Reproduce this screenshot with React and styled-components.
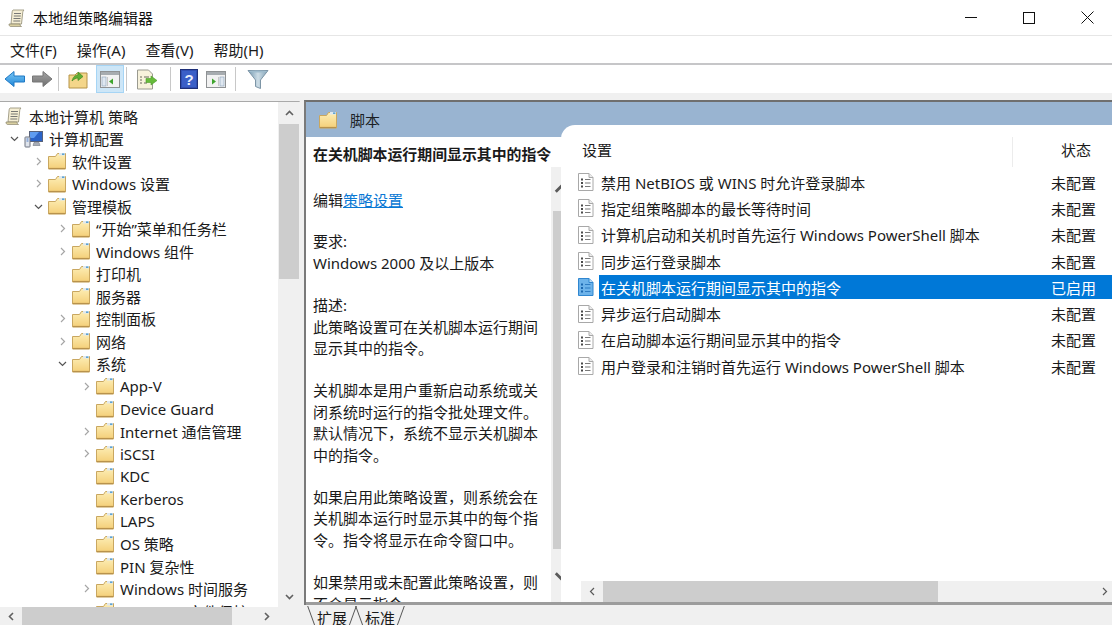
import React from "react";
import styled, { createGlobalStyle } from "styled-components";

const Global = createGlobalStyle`
  html, body { margin: 0; padding: 0; background: #fff; }
  body { font-family: "Noto Sans", "Noto Sans CJK SC", sans-serif; }
`;

const FONT = `"Noto Sans", "Noto Sans CJK SC", sans-serif`;

const Window = styled.div`
  width: 1112px; height: 625px; overflow: hidden; display: flex; flex-direction: column;
  font-family: ${FONT}; font-size: 15px; color: #1a1a1a; background: #fff;
`;
const TitleBar = styled.div`
  height: 36px; flex: none; display: flex; align-items: center; padding: 0 18px 0 8px;
  border-bottom: 1px solid #e6e6e6; box-sizing: border-box;
`;
const TitleText = styled.span`margin-left: 7px; flex: 1; color: #111;`;
const Controls = styled.div`display: flex; gap: 46px; align-items: center;`;
const MenuBar = styled.div`
  height: 29px; flex: none; box-sizing: border-box; display: flex; gap: 20px; align-items: center; padding: 0 0 0 10px;
  border-bottom: 2px solid #c6c6c8;
`;
const Toolbar = styled.div`
  height: 28px; flex: none; display: flex; align-items: center; padding-left: 3px;
`;
const ToolBtn = styled.div`
  width: ${p => p.$w || 28}px; height: 28px; flex: none; display: flex; align-items: center; justify-content: center;
  box-sizing: border-box;
  ${p => p.$active && `background: #cde6f7; border: 1px solid #a6d5f5;`}
`;
const ToolSep = styled.div`width: 1px; height: 24px; background: #c8c8c8; flex: none; margin: 0 ${p => p.$m || 5}px;`;
const Body = styled.div`
  flex: 1; min-height: 0; display: flex; background: #f0f0f0; padding-top: 8px; align-items: stretch;
`;
const TreePane = styled.div`
  width: 300px; flex: none; display: grid; grid-template-columns: 278px 22px; grid-template-rows: 1fr 18px;
  border-top: 1px solid #a9a9a9; border-right: 1px solid #d8d8d8; box-sizing: border-box;
`;
const TreeList = styled.div`overflow: hidden; background: #fff; padding-top: 3px;`;
const TreeRow = styled.div`
  height: 22.5px; display: flex; align-items: center; padding-left: ${p => 4 + 24 * Math.max(p.$depth - 1, 0)}px;
  white-space: nowrap;
`;
const Chevron = styled.div`width: 20px; flex: none; display: flex; justify-content: center; align-items: center;`;
const TreeLabel = styled.span`margin-left: 6px;`;
const RootRow = styled(TreeRow)`padding-left: 5px;`;
const VTrack = styled.div`
  background: #f0f0f0; display: flex; flex-direction: column; align-items: center; min-height: 0;
`;
const ArrowBox = styled.div`
  flex: none; height: ${p => p.$h}px; display: flex; align-items: center; justify-content: center; width: 100%;
`;
const VThumb = styled.div`
  flex: none; width: ${p => p.$w}px; height: ${p => p.$h}px; background: #cdcdcd;
`;
const Spacer = styled.div`flex: 1; min-height: 0; min-width: 0;`;
const HTrack = styled.div`
  grid-column: 1 / span 2; background: #f0f0f0; display: flex; align-items: center;
`;
const HArrowBox = styled.div`
  flex: none; width: ${p => p.$w}px; height: 100%; display: flex; align-items: center; justify-content: center;
`;
const HThumb = styled.div`flex: none; width: ${p => p.$w}px; height: 100%; background: #cdcdcd;`;

const RightPane = styled.div`
  flex: 1; min-width: 0; margin-left: 4px; display: flex; flex-direction: column;
  border-top: 2px solid #6f6f6f; border-left: 2px solid #7a7a7a; background: #fff; margin-top: -1px; margin-bottom: 20px;
  position: relative;
`;
const Band = styled.div`
  height: 35px; flex: none; background: #99b4d1; display: flex; align-items: center; padding-left: 13px; gap: 13px; color: #1b1f25;
`;
const Panes = styled.div`
  flex: 1; min-height: 0; display: flex; border-bottom: 3px solid #9c9c9c;
`;
const DescCol = styled.div`
  width: 245px; flex: none; padding: 7px 0 0 7px; box-sizing: border-box; overflow: hidden; line-height: 21.7px; color: #1a1a1a;
`;
const DescTitle = styled.div`font-weight: 700; white-space: nowrap; margin-bottom: 24px; font-size: 14.9px;`;
const Para = styled.div`margin-bottom: 20px; white-space: nowrap;`;
const PolicyLink = styled.span`color: #0a78d4; text-decoration: underline;`;
const DescScroll = styled.div`
  width: 21px; flex: none; display: flex; flex-direction: column; margin-top: 30px; background: #f0f0f0; align-items: center;
`;
const ListCol = styled.div`
  flex: 1; min-width: 0; display: flex; flex-direction: column; background: #fff; margin-top: -12px; border-top-left-radius: 14px; position: relative;
  margin-left: -11px; overflow: hidden;
`;
const ListInner = styled.div`flex: 1; min-height: 0; padding-left: 20px; display: flex; flex-direction: column;`;
const ListHead = styled.div`
  height: 42px; flex: none; display: flex; align-items: flex-end; padding: 0 0 6px 0; box-sizing: border-box; position: relative;
`;
const HeadSetting = styled.div`width: 430px; padding-left: 2px; flex: none; line-height: 22px; margin-left: -1px;`;
const HeadDivider = styled.div`width: 1px; height: 30px; background: #ececec; margin-bottom: -6px; flex: none;`;
const HeadState = styled.div`padding-left: 48px; line-height: 22px;`;
const Rows = styled.div`padding-top: 2px;`;
const Row = styled.div`
  height: 26.3px; display: flex; align-items: center; white-space: nowrap; margin-left: -3px;
`;
const RowIcon = styled.div`width: 21px; flex: none; display: flex; align-items: center; justify-content: flex-start;`;
const RowMain = styled.div`
  flex: 1; height: 24px; display: flex; align-items: center; padding-left: 2px; min-width: 0;
  ${p => p.$sel && `background: #0078d7; color: #fff;`}
`;
const RowName = styled.div`width: 450px; flex: none; color: inherit;`;
const RowState = styled.div`color: inherit;`;
const HBar = styled.div`height: 21px; flex: none; display: flex; background: #f0f0f0; margin-left: 20px;`;
const TabsBar = styled.div`
  position: absolute; left: -2px; right: 0; top: 100%; height: 22px; background: #f0f0f0; display: flex; align-items: flex-end; padding-left: 12px; gap: 16px;
  margin-top: 0;
  color: #1a1a1a;
`;
const Tab = styled.div`
  position: relative; height: 21px; line-height: 24px; padding: 0 1px;
  &::before, &::after {
    content: ""; position: absolute; top: 0; bottom: 0; width: 1px; background: #555;
  }
  &::before { left: -5px; transform: skewX(20deg); }
  &::after { right: -5px; transform: skewX(-20deg); }
`;

const Folder = ({ size = 18 }) => (
  <svg width={size} height={size} viewBox="0 0 18 18">
    <defs>
      <linearGradient id="fg" x1="0" y1="0" x2="0" y2="1">
        <stop offset="0" stopColor="#fdeeb6" />
        <stop offset="1" stopColor="#f4cf78" />
      </linearGradient>
    </defs>
    <path d="M.5 4.5V17h17V1.5h-8l-2 3z" fill="url(#fg)" stroke="#c9a760" strokeWidth="1" />
    <rect x="11" y="1" width="6" height="2.5" fill="#dfe8ee" />
    <rect x="14" y="1.4" width="2.4" height="1.6" fill="#5ea3d4" />
    <path d="M1 16.5h16" stroke="#b8924c" strokeWidth="1.2" />
  </svg>
);
const Scroll = ({ size = 18 }) => (
  <svg width={size} height={size} viewBox="0 0 18 18">
    <path d="M5 1h11c-1 1-1.3 2-1.3 3l-1.2 11H3L4 4c.1-1.4.3-2.5 1-3z" fill="#f5eed4" stroke="#8f8a72" strokeWidth=".8" />
    <path d="M1 15h11c0 1.2.5 2 1.5 2.6H2.5C1.5 17.300 1 16.200 1 15z" fill="#d9cfa0" stroke="#8f8a72" strokeWidth=".8" />
    <path d="M6 4.500h7M5.800 7h7M5.500 9.500h7M5.300 12h7" stroke="#6a6a6a" strokeWidth=".9" />
  </svg>
);
const Computer = () => (
  <svg width="19" height="18" viewBox="0 0 19 18">
    <rect x="5.500" y="1.500" width="13" height="10" fill="#2b63c7" stroke="#58627a" />
    <path d="M6 2h9l-5 6H6z" fill="#5f9cf0" />
    <path d="M10 12.500h5l1 3H9z" fill="#a8adb7" stroke="#747a85" strokeWidth=".6" />
    <rect x="1" y="7" width="5" height="10" rx=".6" fill="#dfe4ec" stroke="#6c7380" />
    <path d="M2.500 9h2M2.500 11h2" stroke="#4c7dc7" strokeWidth="1" />
  </svg>
);
const DocIcon = ({ sel }) => {
  const c = sel ? "#1c68b0" : "#4a4a4a";
  return (
    <svg width="16" height="20" viewBox="0 0 16 20">
      <path d="M.5 1.500h10.500l4 4v13H.5z" fill={sel ? "#6db3ea" : "#fff"} stroke={sel ? "#2f86d0" : "#a8a8a8"} />
      <path d="M11 1.500v4h4" fill={sel ? "#bcdcf5" : "#ececec"} stroke={sel ? "#2f86d0" : "#a8a8a8"} />
      {[7.5, 11, 14.500].map(y => (
        <g key={y}>
          <rect x="3" y={y - 1} width="2" height="2" fill={c} />
          <path d={`M7 ${y}h5.500`} stroke={sel ? "#2f7cc2" : "#7a7a7a"} strokeWidth="1" />
        </g>
      ))}
    </svg>
  );
};
const Chev = ({ dir, color = "#a6a6a6", size = 9, sw = 1.2 }) => {
  const d = { r: "M3 1l3.500 3.500L3 8", d: "M1 3l3.500 3.500L8 3", u: "M1 6l3.500-3.500L8 6", l: "M6 1L2.500 4.500 6 8" }[dir];
  return <svg width={size} height={size} viewBox="0 0 9 9"><path d={d} fill="none" stroke={color} strokeWidth={sw} /></svg>;
};
const ArrowIcon = ({ left, color1, color2, stroke }) => (
  <svg width="22" height="18" viewBox="0 0 22 18" style={{ transform: left ? "none" : "scaleX(-1)" }}>
    <defs>
      <linearGradient id={color1.slice(1)} x1="0" y1="0" x2="0" y2="1">
        <stop offset="0" stopColor={color1} />
        <stop offset="1" stopColor={color2} />
      </linearGradient>
    </defs>
    <path d="M1 9l9-7.500V6h10.500v6H10v4.500z" fill={`url(#${color1.slice(1)})`} stroke={stroke} strokeWidth="1" />
  </svg>
);
const UpFolder = () => (
  <svg width="20" height="20" viewBox="0 0 20 20">
    <path d="M1 6v13h18V4H9L7 6z" fill="#f4d68a" stroke="#b69448" />
    <path d="M4 12c1-4 3-6 6-6V3l5 4.500-5 4V9c-2 0-4 1-6 3z" fill="#5fae34" stroke="#3f8a22" strokeWidth=".7" />
  </svg>
);
const PanelIcon = ({ flip }) => (
  <svg width="20" height="17" viewBox="0 0 20 17">
    <rect x=".5" y=".5" width="19" height="16" fill="#f2f2f2" stroke="#8f9294" />
    <rect x="1" y="1" width="18" height="3" fill="#a7acb0" />
    <rect x={flip ? 14 : 2} y="6" width="4" height="9" fill="#dfe7f0" stroke="#8aa0b8" strokeWidth=".6" />
    <path d={flip ? "M6 7.500l4 3-4 3z" : "M13 7.500l-4 3 4 3z"} fill="#3fa52e" />
    <path d={flip ? "M12.500 6v9" : "M7.500 6v9"} stroke="#c8c8c8" />
  </svg>
);
const ExportIcon = () => (
  <svg width="22" height="21" viewBox="0 0 22 21">
    <path d="M1.500 1h11l4 4v15h-15z" fill="#f7f2dc" stroke="#9a9a90" />
    <path d="M4 8h2M8 8h5M4 11h2M4 14h2M8 14h3" stroke="#6a6a5e" />
    <path d="M10 9.500h5V7l6 4.500-6 4.500v-2.500h-5z" fill="#67bb3b" stroke="#4a9a28" strokeWidth=".6" />
  </svg>
);
const HelpIcon = () => (
  <svg width="18" height="20" viewBox="0 0 18 20">
    <rect x=".5" y=".5" width="17" height="19" fill="#2f4eb2" stroke="#1d2f78" />
    <rect x="2" y="2" width="14" height="16" fill="#3a5fc8" />
    <text x="9" y="15.500" textAnchor="middle" fontSize="15" fontWeight="700" fill="#e8eefc" fontFamily="Liberation Sans, sans-serif">?</text>
  </svg>
);
const FilterIcon = () => (
  <svg width="22" height="21" viewBox="0 0 22 21">
    <defs>
      <linearGradient id="flt" x1="0" y1="0" x2="1" y2="0">
        <stop offset="0" stopColor="#6f95ad" />
        <stop offset=".5" stopColor="#cddde6" />
        <stop offset="1" stopColor="#7e9fb4" />
      </linearGradient>
    </defs>
    <path d="M1 1.500h20L13.500 11v8.500l-5-2V11z" fill="url(#flt)" stroke="#7d95a6" />
    <ellipse cx="11" cy="2.500" rx="9" ry="1" fill="#9fbccd" />
  </svg>
);

const tree = [
  { d: 1, t: "计算机配置", c: "d", computer: true },
  { d: 2, t: "软件设置", c: "r" },
  { d: 2, t: "Windows 设置", c: "r" },
  { d: 2, t: "管理模板", c: "d" },
  { d: 3, t: "“开始”菜单和任务栏", c: "r" },
  { d: 3, t: "Windows 组件", c: "r" },
  { d: 3, t: "打印机" },
  { d: 3, t: "服务器" },
  { d: 3, t: "控制面板", c: "r" },
  { d: 3, t: "网络", c: "r" },
  { d: 3, t: "系统", c: "d" },
  { d: 4, t: "App-V", c: "r" },
  { d: 4, t: "Device Guard" },
  { d: 4, t: "Internet 通信管理", c: "r" },
  { d: 4, t: "iSCSI", c: "r" },
  { d: 4, t: "KDC" },
  { d: 4, t: "Kerberos" },
  { d: 4, t: "LAPS" },
  { d: 4, t: "OS 策略" },
  { d: 4, t: "PIN 复杂性" },
  { d: 4, t: "Windows 时间服务", c: "r" },
  { d: 4, t: "Windows 文件保护", c: "r" },
];

const rows = [
  ["禁用 NetBIOS 或 WINS 时允许登录脚本", "未配置"],
  ["指定组策略脚本的最长等待时间", "未配置"],
  ["计算机启动和关机时首先运行 Windows PowerShell 脚本", "未配置"],
  ["同步运行登录脚本", "未配置"],
  ["在关机脚本运行期间显示其中的指令", "已启用", true],
  ["异步运行启动脚本", "未配置"],
  ["在启动脚本运行期间显示其中的指令", "未配置"],
  ["用户登录和注销时首先运行 Windows PowerShell 脚本", "未配置"],
];

const paras = [
  ["要求:", "Windows 2000 及以上版本"],
  ["描述:", "此策略设置可在关机脚本运行期间", "显示其中的指令。"],
  ["关机脚本是用户重新启动系统或关", "闭系统时运行的指令批处理文件。", "默认情况下，系统不显示关机脚本", "中的指令。"],
  ["如果启用此策略设置，则系统会在", "关机脚本运行时显示其中的每个指", "令。指令将显示在命令窗口中。"],
  ["如果禁用或未配置此策略设置，则", "不会显示指令。"],
];

export default function App() {
  return (
    <Window>
      <Global />
      <TitleBar>
        <Scroll />
        <TitleText>本地组策略编辑器</TitleText>
        <Controls>
          <svg width="12" height="12" viewBox="0 0 12 12"><path d="M0 5.500h12" stroke="#111" /></svg>
          <svg width="12" height="12" viewBox="0 0 12 12"><rect x=".5" y=".5" width="11" height="11" fill="none" stroke="#111" /></svg>
          <svg width="13" height="13" viewBox="0 0 13 13"><path d="M.5.500l12 12M12.500.500l-12 12" stroke="#111" /></svg>
        </Controls>
      </TitleBar>
      <MenuBar>
        <span>文件(F)</span><span>操作(A)</span><span>查看(V)</span><span>帮助(H)</span>
      </MenuBar>
      <Toolbar>
        <ToolBtn $w={24}><ArrowIcon left color1="#7cc8f5" color2="#1f86d8" stroke="#1f78c4" /></ToolBtn>
        <ToolBtn $w={30}><ArrowIcon color1="#a6a6a6" color2="#6f6f6f" stroke="#777" /></ToolBtn>
        <ToolSep $m={1} />
        <ToolBtn $w={36}><UpFolder /></ToolBtn>
        <ToolBtn $w={28} $active><PanelIcon /></ToolBtn>
        <ToolSep $m={2} />
        <ToolBtn $w={36}><ExportIcon /></ToolBtn>
        <ToolSep $m={0} />
        <ToolBtn $w={26}><HelpIcon /></ToolBtn>
        <ToolBtn $w={28}><PanelIcon flip /></ToolBtn>
        <ToolSep $m={0} />
        <ToolBtn $w={34}><FilterIcon /></ToolBtn>
      </Toolbar>
      <Body>
        <TreePane>
          <TreeList>
            <RootRow $depth={0}><Scroll /><TreeLabel>本地计算机 策略</TreeLabel></RootRow>
            {tree.map(n => (
              <TreeRow key={n.t} $depth={n.d}>
                <Chevron>{n.c && <Chev dir={n.c} color={n.c === "d" ? "#555" : "#a6a6a6"} />}</Chevron>
                {n.computer ? <Computer /> : <Folder />}
                <TreeLabel>{n.t}</TreeLabel>
              </TreeRow>
            ))}
          </TreeList>
          <VTrack>
            <ArrowBox $h={22}><Chev dir="u" color="#606060" sw={1.6} /></ArrowBox>
            <VThumb $w={20} $h={155} />
            <Spacer />
            <ArrowBox $h={22}><Chev dir="d" color="#606060" sw={1.6} /></ArrowBox>
          </VTrack>
          <HTrack>
            <HArrowBox $w={22}><Chev dir="l" color="#606060" sw={1.6} /></HArrowBox>
            <HThumb $w={210} />
            <Spacer />
            <HArrowBox $w={67}><Chev dir="r" color="#606060" sw={1.6} /></HArrowBox>
          </HTrack>
        </TreePane>
        <RightPane>
          <Band><Folder size={18} /><span>脚本</span></Band>
          <Panes>
            <DescCol>
              <DescTitle>在关机脚本运行期间显示其中的指令</DescTitle>
              <Para>编辑<PolicyLink>策略设置</PolicyLink></Para>
              {paras.map(p => (
                <Para key={p[0]}>{p.map(l => <div key={l}>{l}</div>)}</Para>
              ))}
            </DescCol>
            <DescScroll>
              <ArrowBox $h={44}><Chev dir="u" color="#5a5a5a" size={16} sw={1.6} /></ArrowBox>
              <VThumb $w={18} $h={338} />
              <Spacer />
              <ArrowBox $h={52}><Chev dir="d" color="#5a5a5a" size={16} sw={1.6} /></ArrowBox>
            </DescScroll>
            <ListCol>
              <ListInner>
                <ListHead>
                  <HeadSetting>设置</HeadSetting>
                  <HeadDivider />
                  <HeadState>状态</HeadState>
                </ListHead>
                <Rows>
                  {rows.map(([n, s, sel]) => (
                    <Row key={n}>
                      <RowIcon><DocIcon sel={sel} /></RowIcon>
                      <RowMain $sel={sel}>
                        <RowName>{n}</RowName>
                        <RowState>{s}</RowState>
                      </RowMain>
                    </Row>
                  ))}
                </Rows>
                <Spacer />
              </ListInner>
              <HBar>
                <HArrowBox $w={22}><Chev dir="l" color="#5a5a5a" /></HArrowBox>
                <HThumb $w={335} />
                <Spacer />
                <HArrowBox $w={16}><Chev dir="r" color="#5a5a5a" /></HArrowBox>
              </HBar>
            </ListCol>
          </Panes>
          <TabsBar>
            <Tab>扩展</Tab>
            <Tab>标准</Tab>
          </TabsBar>
        </RightPane>
      </Body>
    </Window>
  );
}
